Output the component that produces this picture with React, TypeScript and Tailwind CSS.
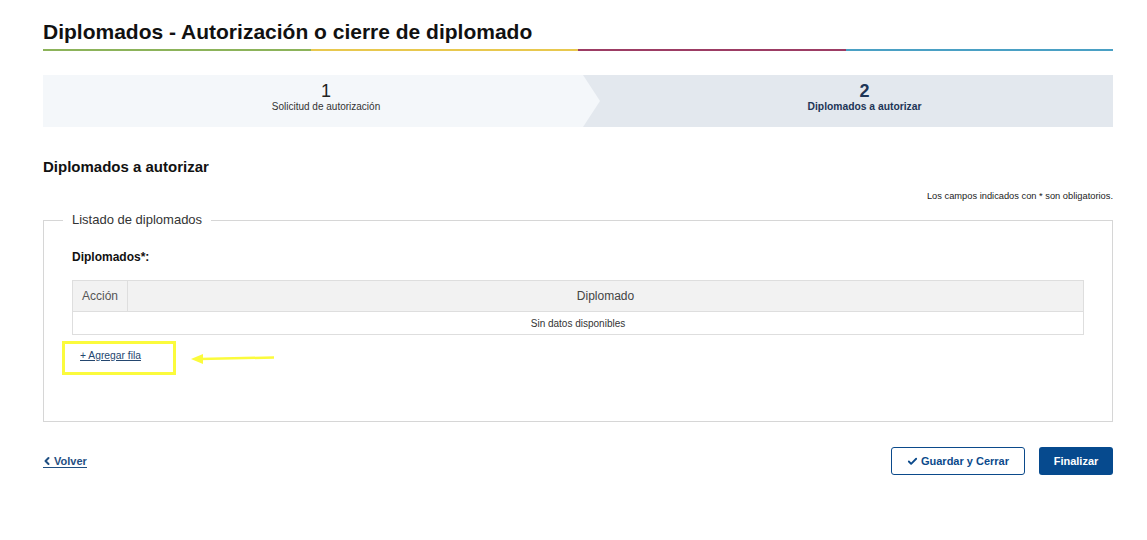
import { Check, ChevronLeft } from "lucide-react";

const font = { fontFamily: '"Liberation Sans", Arial, sans-serif' };

export default function App() {
  return (
    <div className="min-h-[540px] bg-white text-[#222]" style={font}>
      <div className="mx-[43px] w-[1070px] pt-[20px]">
        {/* title */}
        <h1 className="text-[21px] leading-[24px] font-bold text-[#111]">
          Diplomados - Autorización o cierre de diplomado
        </h1>
        <div className="mt-[5px] flex h-[2px]">
          <div className="flex-1 bg-[#8cb35a]" />
          <div className="flex-1 bg-[#e8c84e]" />
          <div className="flex-1 bg-[#9c3c64]" />
          <div className="flex-1 bg-[#4aa0c4]" />
        </div>

        {/* stepper */}
        <div className="mt-[24px] flex h-[52px] bg-[#e3e8ee]">
          <div className="flex w-[557px] flex-col items-center bg-[#f4f7fa] pt-[7px] pl-[9px] [clip-path:polygon(0_0,calc(100%-17px)_0,100%_50%,calc(100%-17px)_100%,0_100%)]">
            <span className="text-[18px] leading-[18px] text-[#222]">1</span>
            <span className="mt-[1px] text-[10px] leading-[12px] text-[#333]">Solicitud de autorización</span>
          </div>
          <div className="flex flex-1 flex-col items-center pt-[7px] pl-[16px]">
            <span className="text-[18px] leading-[18px] font-bold text-[#1d3557]">2</span>
            <span className="mt-[1px] text-[10.3px] leading-[12px] font-bold text-[#1d3557]">Diplomados a autorizar</span>
          </div>
        </div>

        {/* section */}
        <h2 className="mt-[30px] text-[15px] leading-[20px] font-bold text-[#111]">Diplomados a autorizar</h2>
        <p className="mt-[13px] text-right text-[9.3px] leading-[12px] text-[#222]">
          Los campos indicados con * son obligatorios.
        </p>

        <fieldset className="mt-[10px] h-[210px] border border-[#d6d6d6] px-[28px]">
          <legend className="ml-[-9px] px-[9px] text-[13px] leading-[16px] text-[#333]">Listado de diplomados</legend>
          <div className="mt-[21px] text-[12px] leading-[16px] font-bold text-[#111]">Diplomados*:</div>

          <table className="mt-[15px] w-full border-collapse text-[12px]">
            <thead>
              <tr className="h-[31px] bg-[#f2f2f2]">
                <th className="w-[55px] border border-[#dedede] pl-[9px] text-left font-normal text-[#555]">Acción</th>
                <th className="border border-[#dedede] font-normal text-[#444]">Diplomado</th>
              </tr>
            </thead>
            <tbody>
              <tr className="h-[23px]">
                <td colSpan={2} className="border border-[#dedede] text-center text-[10px] text-[#333]">
                  Sin datos disponibles
                </td>
              </tr>
            </tbody>
          </table>

          <div className="relative mt-[14px] w-fit text-[10.3px] leading-[14px]">
            <a href="#" className="ml-[8px] block text-[#24466f] underline">+ Agregar fila</a>
            <div className="absolute left-[-10px] top-[-8px] h-[34px] w-[114px] border-[3px] border-[#fbfb3c]" />
            <svg className="absolute left-[118px] top-[2px]" width="86" height="16" viewBox="0 0 86 16">
              <line x1="10" y1="8" x2="84" y2="6.5" stroke="#fbfb3c" strokeWidth="2.5" />
              <polygon points="1,8 13,3 13,13" fill="#fbfb3c" />
            </svg>
          </div>
        </fieldset>

        {/* footer */}
        <div className="mt-[25px] flex items-center justify-between">
          <a href="#" className="flex items-center border-b border-[#1f4f82] text-[11px] leading-[12px] font-bold text-[#1f4f82]">
            <ChevronLeft size={12} strokeWidth={4} className="ml-[-2px] mr-[1px]" />
            Volver
          </a>
          <div className="flex gap-[14px]">
            <button className="flex h-[28px] w-[134px] items-center justify-center gap-[3px] rounded-[3px] border border-[#0b4a8b] bg-white text-[11px] font-bold text-[#0b4a8b]">
              <Check size={11} strokeWidth={4} />
              Guardar y Cerrar
            </button>
            <button className="h-[28px] w-[74px] rounded-[3px] bg-[#064a8e] text-[11px] font-bold text-white">
              Finalizar
            </button>
          </div>
        </div>
      </div>
    </div>
  );
}
